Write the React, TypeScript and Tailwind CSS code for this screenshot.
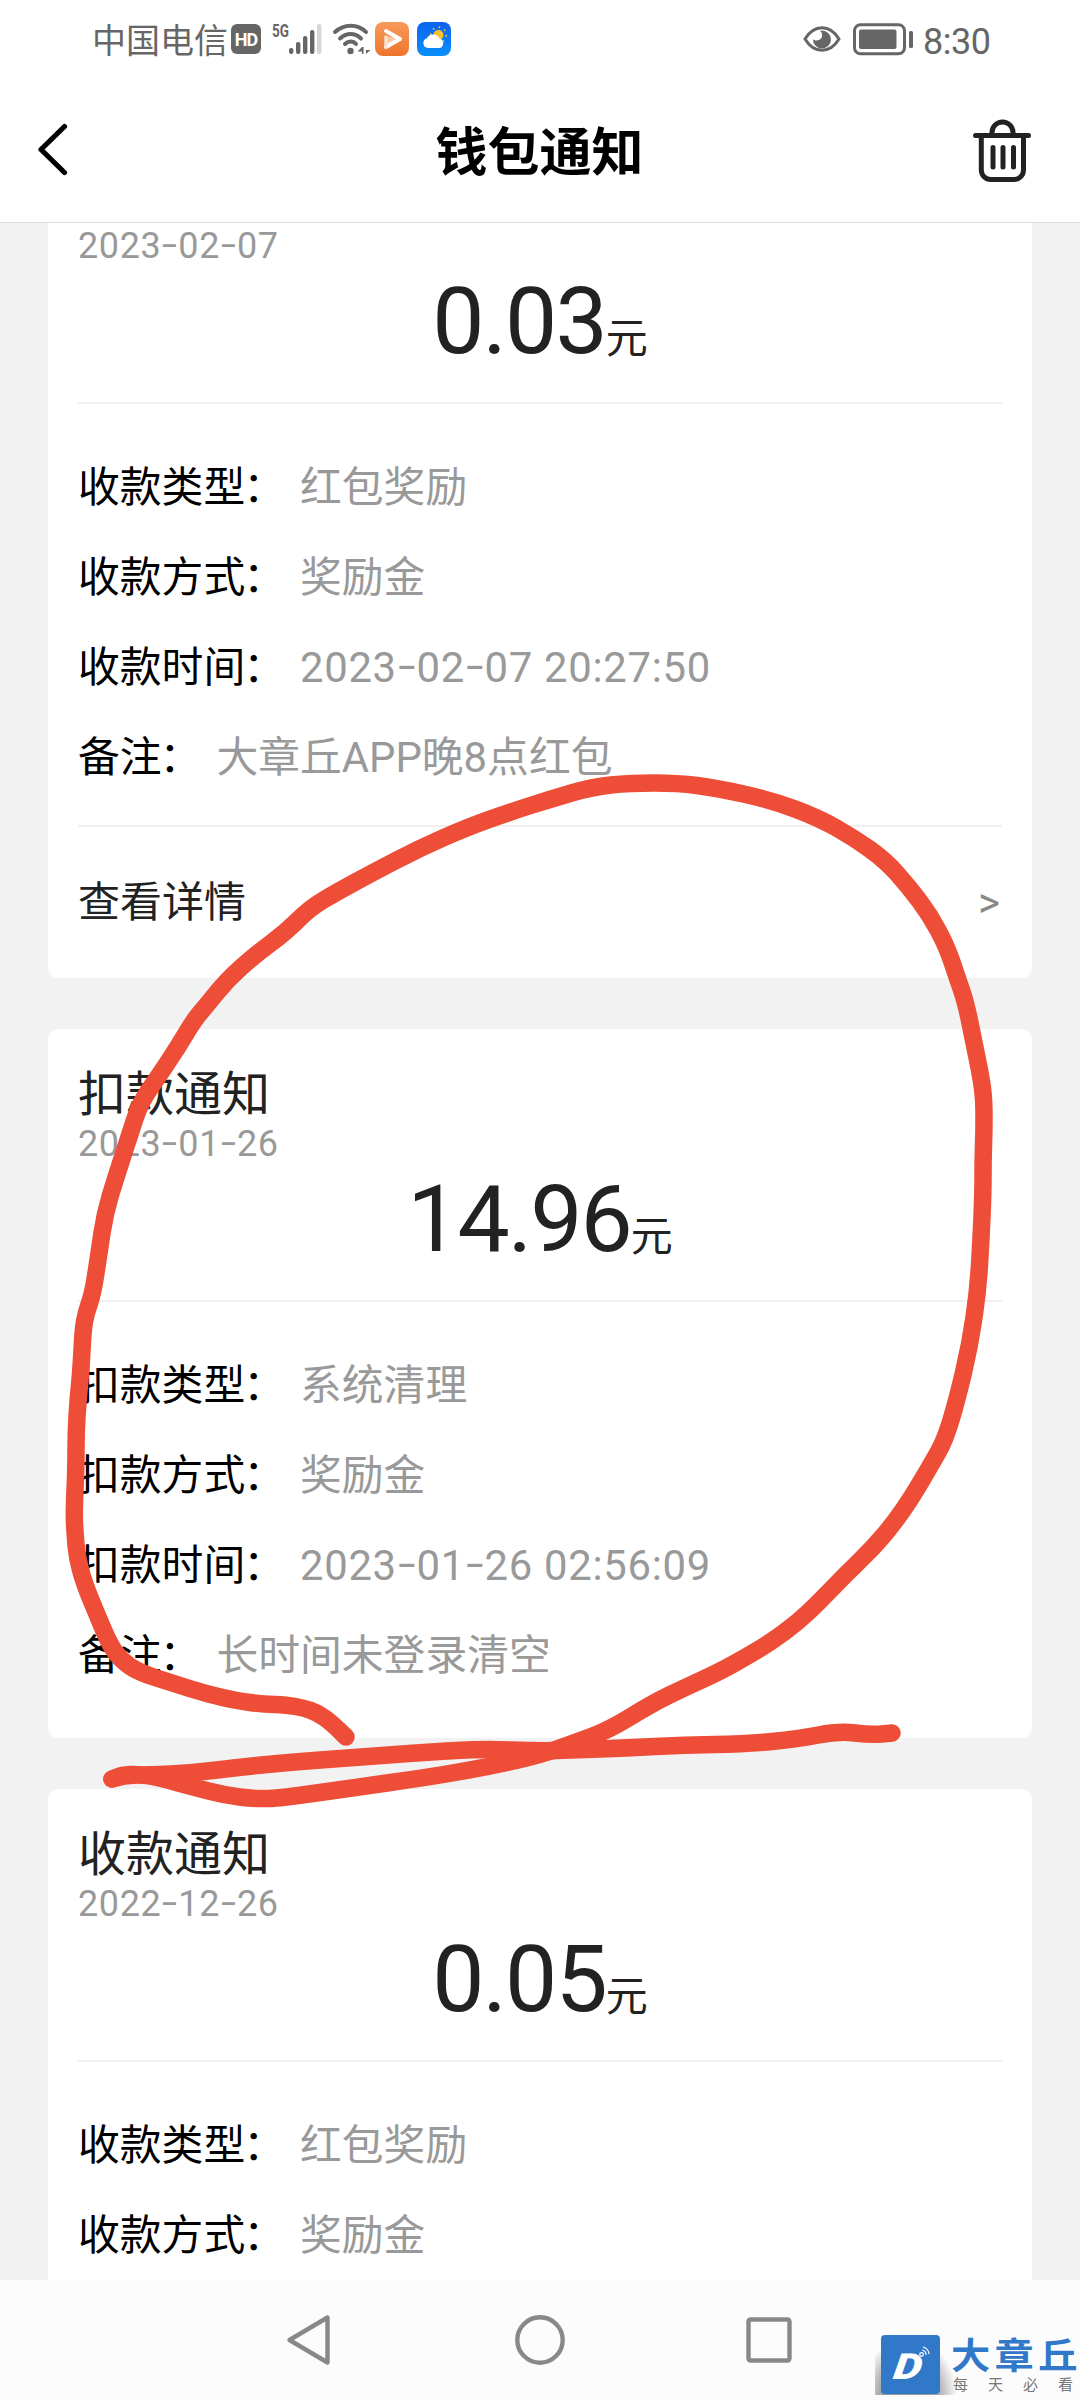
type Row = { label: string; value: string }

type Notice = {
  title?: string
  date: string
  amount: string
  rows: Row[]
  link?: string
}

const NOTICES: Notice[] = [
  {
    date: '2023-02-07',
    amount: '0.03',
    rows: [
      { label: '收款类型', value: '红包奖励' },
      { label: '收款方式', value: '奖励金' },
      { label: '收款时间', value: '2023-02-07 20:27:50' },
      { label: '备注', value: '大章丘APP晚8点红包' },
    ],
    link: '查看详情',
  },
  {
    title: '扣款通知',
    date: '2023-01-26',
    amount: '14.96',
    rows: [
      { label: '扣款类型', value: '系统清理' },
      { label: '扣款方式', value: '奖励金' },
      { label: '扣款时间', value: '2023-01-26 02:56:09' },
      { label: '备注', value: '长时间未登录清空' },
    ],
  },
  {
    title: '收款通知',
    date: '2022-12-26',
    amount: '0.05',
    rows: [
      { label: '收款类型', value: '红包奖励' },
      { label: '收款方式', value: '奖励金' },
    ],
  },
]

type Point = [number, number]

const LOOP: Point[] = [
  [346, 1737], [333, 1724], [318, 1713], [304, 1708], [287, 1705], [262, 1704], [238, 1701], [207, 1694],
  [172, 1683], [138, 1672], [121, 1660], [110, 1645], [98, 1617], [84, 1583], [77, 1557],
  [75, 1533], [74, 1513], [76, 1467], [76, 1433], [78, 1400], [81, 1370], [83, 1330],
  [86, 1313], [93, 1293], [99, 1253], [105, 1213], [116, 1177], [129, 1137], [140, 1103],
  [158, 1077], [178, 1047], [194, 1020], [206, 1006], [227, 980], [255, 955], [286, 932],
  [310, 908], [337, 892], [372, 873], [420, 848], [468, 827], [510, 812], [551, 799],
  [592, 787], [630, 783], [678, 783], [716, 788], [771, 800], [819, 818], [854, 838],
  [885, 860], [909, 887], [930, 915], [947, 947], [957, 977], [966, 1003], [974, 1043],
  [981, 1077], [984, 1100], [984, 1133], [983, 1160], [983, 1193], [981, 1240], [978, 1290],
  [970, 1345], [957, 1400], [945, 1440], [932, 1463], [912, 1497], [894, 1523], [873, 1548],
  [846, 1574], [819, 1602], [798, 1622], [771, 1642], [746, 1657], [719, 1672], [684, 1688],
  [653, 1703], [609, 1730], [574, 1743], [540, 1755], [492, 1766], [430, 1777], [344, 1789],
  [282, 1798], [255, 1799], [224, 1795], [193, 1787], [160, 1778], [138, 1774], [122, 1775], [112, 1779],
]

const UNDERLINE: Point[] = [
  [112, 1779], [124, 1775], [148, 1775], [193, 1773], [241, 1767], [293, 1762], [361, 1757],
  [430, 1752], [482, 1749], [540, 1751], [574, 1750], [626, 1748], [684, 1745],
  [746, 1744], [798, 1739], [839, 1731], [871, 1735], [892, 1733],
]

// Quadratic segments through the midpoints, so the stroke has no corners
function smooth(points: Point[]) {
  let d = `M${points[0][0]} ${points[0][1]}`
  for (let i = 1; i < points.length - 1; i++) {
    const [x, y] = points[i]
    const [nx, ny] = points[i + 1]
    d += `Q${x} ${y} ${(x + nx) / 2} ${(y + ny) / 2}`
  }
  const last = points[points.length - 1]
  return `${d}L${last[0]} ${last[1]}`
}

function Digits({ text }: { text: string }) {
  if (!text.includes('-')) return <>{text}</>
  return (
    <span className="tracking-[0.017em]">
      {text.split(/(-)/).map((part, i) =>
        part === '-' ? (
          <span key={i} className="inline-block w-[0.47em] origin-center scale-x-150 -translate-y-[0.04em] text-center tracking-normal">-</span>
        ) : (
          <span key={i}>{part}</span>
        ),
      )}
    </span>
  )
}

function StatusBar() {
  return (
    <div className="flex h-[80px] items-start pl-[92px] text-[#666]">
      <span className="mt-[21px] h-[40px] text-[34px] leading-[40px]">中国电信</span>
      <span className="mt-[24px] ml-[3px] flex h-[30px] w-[30px] items-center justify-center rounded-[6px] bg-[#666] text-[18px] font-bold tracking-[-1px] text-white">
        HD
      </span>
      <span className="mt-[22px] ml-[11px] w-[17px] origin-left scale-x-[0.75] text-[18px] leading-[18px] font-bold">5G</span>
      <svg className="mt-[22px]" width="33" height="34" viewBox="0 0 33 34" fill="#666">
        <rect x="0" y="26" width="4.4" height="6" rx="2" />
        <rect x="7" y="20" width="4.4" height="12" rx="2" />
        <rect x="14" y="14" width="4.4" height="18" rx="2" />
        <rect x="21" y="8" width="4.4" height="24" rx="2" />
        <rect x="28" y="2" width="4.4" height="30" rx="2" fill="#d6d6d6" />
      </svg>
      <svg className="mt-[22px] ml-[10px]" width="39" height="34" viewBox="0 0 39 34" fill="none" stroke="#666" strokeWidth="4" strokeLinecap="round">
        <path d="M3 10C12 1.500 26 1.500 34 10" />
        <path d="M8 16.500C14.500 10.500 23 10.500 29 16.500" />
        <path d="M13 22C16.500 18.500 21 18.500 24 22" />
        <circle cx="18.500" cy="29" r="3.200" fill="#666" stroke="none" />
        <path d="M30 25v7h1.500v-7zM30 25l-4.500 4.500h4.500zM34 25v7l4.500-4h-4.500" fill="#666" stroke="none" />
      </svg>
      <svg className="mt-[22px] ml-[4px]" width="34" height="34" viewBox="0 0 34 34">
        <defs>
          <linearGradient id="video" x1="0" y1="0" x2="0" y2="1">
            <stop offset="0" stopColor="#f79a5c" />
            <stop offset="1" stopColor="#ef742c" />
          </linearGradient>
        </defs>
        <rect width="34" height="34" rx="8" fill="url(#video)" />
        <path d="M12 14v11l12-8z" fill="#f9c9a6" />
        <path d="M11 9L25 17L11 25" fill="none" stroke="#fff" strokeWidth="4" strokeLinecap="round" strokeLinejoin="round" />
        <path d="M11 25v-10" stroke="#fde3d0" strokeWidth="3.500" strokeLinecap="round" />
      </svg>
      <svg className="mt-[22px] ml-[8px]" width="34" height="34" viewBox="0 0 34 34">
        <defs>
          <linearGradient id="sky" x1="0" y1="0" x2="0" y2="1">
            <stop offset="0" stopColor="#0d63ee" />
            <stop offset="1" stopColor="#0a90fb" />
          </linearGradient>
        </defs>
        <rect width="34" height="34" rx="8" fill="url(#sky)" />
        <circle cx="21.500" cy="13" r="7.800" fill="none" stroke="#fcc64a" strokeWidth="1.600" strokeDasharray="1.600 4.500" />
        <circle cx="21.500" cy="13" r="5" fill="#fcc02c" />
        <path d="M11 26a5 5 0 0 1-1-9.800a7 7 0 0 1 12.500 0.300a5 5 0 0 1 .5 9.500z" fill="#fff" />
      </svg>
      <svg className="mt-[24px] ml-[352px]" width="38" height="30" viewBox="0 0 38 30">
        <path d="M2 15C11 0 27 0 36 15C27 30 11 30 2 15Z" fill="none" stroke="#666" strokeWidth="3" />
        <path d="M19 6.500a9 9 0 1 1-9 8.500c1.500 2.500 8 2 9-2.500c.5-2.500-.5-4.500-2-5.700z" fill="#666" />
      </svg>
      <svg className="mt-[23px] ml-[12px]" width="61" height="33" viewBox="0 0 61 33">
        <rect x="1.500" y="1.800" width="50" height="29" rx="6" fill="none" stroke="#666" strokeWidth="3" />
        <rect x="6" y="6.500" width="37.500" height="19.500" rx="2" fill="#666" />
        <rect x="56" y="8" width="4" height="17" rx="1.500" fill="#666" />
      </svg>
      <span className="mt-[22px] ml-[9px] text-[36px] leading-[40px] font-normal tracking-[-0.5px]">8:30</span>
    </div>
  )
}

function Header() {
  return (
    <header className="relative z-10 bg-white">
      <StatusBar />
      <div className="flex h-[143px] items-start justify-between border-b border-[#dcdcdc] pr-[49px] pl-[38px]">
        <svg className="mt-[42px]" width="58" height="56" viewBox="0 0 58 56" fill="none" stroke="#000" strokeWidth="5.200" strokeLinecap="round" strokeLinejoin="round">
          <path d="M26.500 4.500L3 27.500L26.500 50.500" />
        </svg>
        <h1 className="mt-[42px] ml-[10px] text-[52px] leading-[64px] font-bold text-black">钱包通知</h1>
        <svg className="mt-[38px]" width="58" height="66" viewBox="0 0 58 66" fill="none" stroke="#222" strokeWidth="5" strokeLinecap="round">
          <path d="M2.500 17.500H55.500" />
          <path d="M19 17V14.500a10.500 10.500 0 0 1 21 0V17" />
          <path d="M8.300 18V52a9.500 9.500 0 0 0 9.500 9.500H41a9.500 9.500 0 0 0 9.500-9.500V18" />
          <path d="M20 29.500v19.500M30 29.500v19.500M40.500 29.500v19.500" />
        </svg>
      </div>
    </header>
  )
}

function NoticeCard({ notice }: { notice: Notice }) {
  const { title, date, amount, rows, link } = notice
  return (
    <section className={title ? 'rounded-[10px] bg-white px-[30px]' : 'rounded-b-[10px] bg-white px-[30px]'}>
      {title && <h2 className="pt-[39px] text-[48px] leading-[53px] text-[#222]">{title}</h2>}
      <p className="h-[46px] text-[36px] leading-[46px] text-[#999]">
        <Digits text={date} />
      </p>
      <div className="flex h-[135px] items-baseline justify-center border-b-2 border-[#f0f0f0] leading-[105px] text-[#222]">
        <span className="text-[93px] tracking-[-2px]">{amount}</span>
        <span className="text-[42px]">元</span>
      </div>
      <div className="pt-[39px]">
        {rows.map((row) => (
          <div key={row.label} className="flex h-[90px] items-center gap-[13px] text-[41.800px]">
            <span className="text-black">
              {row.label}
              <span className="-ml-[2px] mr-[2px]">：</span>
            </span>
            <span className="text-[#999]">
              <Digits text={row.value} />
            </span>
          </div>
        ))}
      </div>
      {link ? (
        <div className="mt-[22px] flex h-[153px] items-center justify-between border-t-2 border-[#f0f0f0] text-[42px] text-[#222]">
          <span>{link}</span>
          <span className="mr-[2px] text-[42px] text-[#888]">&gt;</span>
        </div>
      ) : (
        <div className="h-[37px]" />
      )}
    </section>
  )
}

function NavBar() {
  return (
    <nav className="flex h-[120px] items-center bg-[#fcfcfc] pl-[286px]">
      <svg width="46" height="52" viewBox="0 0 46 52" fill="none" stroke="#888" strokeWidth="4.400" strokeLinejoin="round">
        <path d="M3.500 26L41.500 3.500V48.500Z" />
      </svg>
      <svg className="ml-[183px]" width="50" height="50" viewBox="0 0 50 50" fill="none" stroke="#888" strokeWidth="4.400">
        <circle cx="25" cy="25" r="22.700" />
      </svg>
      <svg className="ml-[181px]" width="46" height="46" viewBox="0 0 46 46" fill="none" stroke="#888" strokeWidth="4.400">
        <rect x="2.500" y="2.500" width="41" height="41" rx="2" />
      </svg>
    </nav>
  )
}

function Watermark() {
  return (
    <div className="absolute top-[2335px] left-[875px] flex">
      <div className="h-[60px] w-[84px] bg-[radial-gradient(ellipse_at_40%_100%,#999_35%,transparent_68%)]">
        <div className="ml-[6px] flex h-[59px] w-[59px] items-center justify-center rounded-[4px] bg-[#3178c8]">
          <span className="mt-[4px] mr-[2px] -skew-x-6 scale-x-125 text-[36px] leading-none font-black text-white italic">D</span>
          <svg className="-mt-[26px] -mr-[6px] -ml-[2px]" width="11" height="12" viewBox="0 0 11 12" fill="none" stroke="#fff" strokeWidth="1.200">
            <circle cx="2.500" cy="8.500" r="1.800" />
            <path d="M3 4a5 5 0 0 1 4 5M4 1a8 8 0 0 1 6 7" />
          </svg>
        </div>
      </div>
      <div className="-ml-[8px] w-[128px]">
        <div className="h-[42px] w-[116px] origin-left scale-x-[1.090] pt-[3px] text-[36px] leading-[38px] font-bold tracking-[4px] whitespace-nowrap text-[#3178c8]">
          大章<span className="tracking-normal">丘</span>
        </div>
        <div className="ml-[2px] text-[15px] leading-[16px] tracking-[20px] whitespace-nowrap text-[#777]">
          每天必<span className="tracking-normal">看</span>
        </div>
      </div>
    </div>
  )
}

export default function App() {
  return (
    <div className="relative flex h-[2400px] w-[1080px] flex-col overflow-hidden bg-[#f2f2f2] font-['Roboto','Noto_Sans_CJK_SC',sans-serif]">
      <Header />
      <main className="flex min-h-0 flex-1 flex-col gap-[51px] overflow-hidden px-[48px]">
        {NOTICES.map((notice) => (
          <NoticeCard key={notice.date} notice={notice} />
        ))}
      </main>
      <NavBar />
      <svg
        className="pointer-events-none absolute inset-0"
        width="1080"
        height="2400"
        viewBox="0 0 1080 2400"
        fill="none"
        stroke="#ee4e38"
        strokeWidth="17.500"
        strokeLinecap="round"
        strokeLinejoin="round"
      >
        <path d={smooth(LOOP)} />
        <path d={smooth(UNDERLINE)} />
      </svg>
      <Watermark />
    </div>
  )
}
